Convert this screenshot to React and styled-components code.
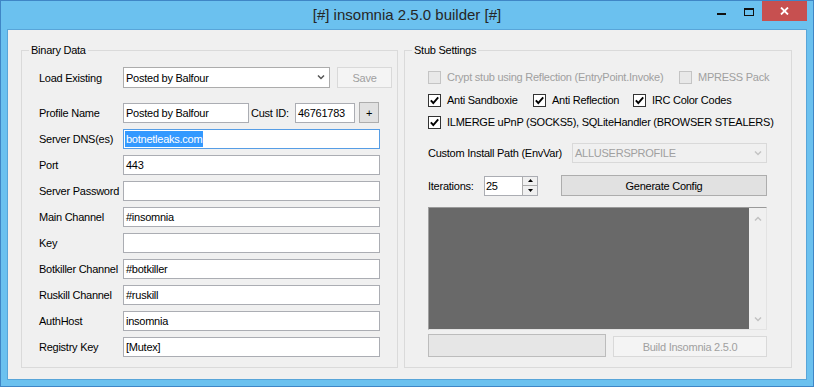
import React from "react";
import styled, { createGlobalStyle } from "styled-components";

const GlobalStyle = createGlobalStyle`
  html, body {
    margin: 0;
    padding: 0;
    background: #ffffff;
  }
  body {
    font-family: "Liberation Sans", Arial, sans-serif;
    font-size: 11px;
    letter-spacing: -0.25px;
    color: #000;
  }
  * {
    box-sizing: border-box;
  }
`;

const Window = styled.div`
  width: 814px;
  height: 387px;
  border: 1px solid #3f86c6;
  background: #6bc1ef;
  display: flex;
  flex-direction: column;
`;

const TitleBar = styled.div`
  height: 28px;
  flex: none;
  display: grid;
  grid-template-columns: 1fr auto 1fr;
`;

const Title = styled.div`
  grid-column: 2;
  font-size: 15px;
  letter-spacing: 0;
  line-height: 28px;
  color: #262626;
  white-space: nowrap;
`;

const Caption = styled.div`
  grid-column: 3;
  justify-self: end;
  align-self: start;
  display: flex;
  margin-right: 6px;
`;

const CaptionButton = styled.div`
  width: ${(p) => p.$w}px;
  height: 20px;
  background: ${(p) => p.$bg || "transparent"};
  display: flex;
  justify-content: center;
  align-items: flex-start;
  padding-top: ${(p) => p.$pt}px;
`;

const MinGlyph = styled.span`
  width: 9px;
  height: 2px;
  background: #111;
`;

const MaxGlyph = styled.span`
  width: 10px;
  height: 8px;
  border: 1px solid #111;
  border-top-width: 2px;
`;

const Client = styled.div`
  flex: 1;
  margin: 0 6px 6px;
  border: 1px solid #58a5d9;
  background: #f0f0f0;
  display: flex;
  align-items: flex-start;
  gap: 6px;
  padding: 13px 0 0 13px;
`;

const Group = styled.fieldset`
  margin: 0;
  padding: 0 0 0 7px;
  min-width: 0;
  width: ${(p) => p.$w}px;
  height: 325px;
  border: 1px solid #dadada;
`;

const Legend = styled.legend`
  padding: 0 2px;
  font-size: 11px;
  line-height: 15px;
`;

const Body = styled.div`
  display: flex;
  flex-direction: column;
  padding: ${(p) => p.$pad};
`;

const Row = styled.div`
  display: flex;
  align-items: center;
  height: ${(p) => p.$h || 20}px;
  margin-top: ${(p) => p.$mt ?? 6}px;
`;

const Label = styled.div`
  width: ${(p) => (p.$w ? `${p.$w}px` : "auto")};
  margin-left: ${(p) => p.$ml || 0}px;
  flex: none;
  white-space: nowrap;
  color: ${(p) => (p.$disabled ? "#a0a0a0" : "#000")};
`;

const TextBox = styled.div`
  width: ${(p) => p.$w}px;
  height: 20px;
  flex: none;
  border: 1px solid ${(p) => (p.$focus ? "#569de5" : "#abadb3")};
  background: #fff;
  padding-left: ${(p) => (p.$focus ? 1 : 2)}px;
  line-height: 18px;
  white-space: nowrap;
  overflow: hidden;
`;

const Selected = styled.span`
  display: inline-block;
  height: 16px;
  line-height: 16px;
  margin-top: 1px;
  vertical-align: top;
  padding: 0 1px;
  background: #3399ff;
  color: #fff;
`;

const Combo = styled.div`
  width: ${(p) => p.$w}px;
  height: ${(p) => p.$h}px;
  flex: none;
  display: flex;
  align-items: center;
  border: 1px solid ${(p) => (p.$disabled ? "#d9d9d9" : "#acacac")};
  background: ${(p) => (p.$disabled ? "#f0f0f0" : "#fff")};
  color: ${(p) => (p.$disabled ? "#a0a0a0" : "#000")};
  padding-left: 2px;
`;

const ComboText = styled.span`
  flex: 1;
  white-space: nowrap;
`;

const ComboArrow = styled.span`
  width: 17px;
  display: flex;
  justify-content: center;
  align-items: center;
`;

const Button = styled.div`
  width: ${(p) => p.$w}px;
  height: ${(p) => p.$h || 21}px;
  margin-left: ${(p) => p.$ml || 0}px;
  flex: none;
  align-self: ${(p) => p.$self || "auto"};
  display: flex;
  justify-content: center;
  align-items: center;
  white-space: nowrap;
  border: 1px solid ${(p) => (p.$disabled ? "#d9d9d9" : "#adadad")};
  background: ${(p) => (p.$disabled ? "#f4f4f4" : "#e1e1e1")};
  color: ${(p) => (p.$disabled ? "#a0a0a0" : "#000")};
`;

const CheckRow = styled.div`
  display: flex;
  align-items: center;
  height: 16px;
  margin-top: ${(p) => p.$mt || 0}px;
`;

const CheckItem = styled.div`
  width: ${(p) => (p.$w ? `${p.$w}px` : "auto")};
  flex: none;
  display: flex;
  align-items: center;
  gap: 6px;
  white-space: nowrap;
  color: ${(p) => (p.$disabled ? "#a0a0a0" : "#000")};
`;

const Box = styled.span`
  width: 13px;
  height: 13px;
  flex: none;
  border: 1px solid ${(p) => (p.$disabled ? "#c4c4c4" : "#333")};
  background: ${(p) => (p.$disabled ? "#e8e8e8" : "#fff")};
  display: flex;
  justify-content: center;
  align-items: center;
`;

const NumBox = styled.div`
  width: 54px;
  height: 20px;
  flex: none;
  display: flex;
  border: 1px solid #abadb3;
  background: #fff;
`;

const NumText = styled.span`
  flex: 1;
  padding-left: 1px;
  line-height: 18px;
`;

const Spin = styled.div`
  width: 15px;
  display: flex;
  flex-direction: column;
  border-left: 1px solid #acacac;
`;

const SpinButton = styled.div`
  flex: 1;
  display: flex;
  justify-content: center;
  align-items: center;
  background: #f0f0f0;
  border-top: ${(p) => (p.$lower ? "1px solid #acacac" : "none")};
`;

const Log = styled.div`
  width: 339px;
  height: 123px;
  margin-top: 11px;
  display: flex;
  border: 1px solid;
  border-color: #9a9a9a #e3e3e3 #e3e3e3 #a0a0a0;
`;

const LogArea = styled.div`
  flex: 1;
  background: #696969;
`;

const ScrollBar = styled.div`
  width: 17px;
  background: #f0f0f0;
  display: flex;
  flex-direction: column;
  justify-content: space-between;
  align-items: center;
  padding: 8px 0 7px;
`;

const Progress = styled.div`
  width: 178px;
  height: 23px;
  flex: none;
  border: 1px solid #bcbcbc;
  background: #e6e6e6;
`;

const Chevron = ({ up, color }) => (
  <svg width="8" height="5" viewBox="0 0 8 5">
    <polyline
      points={up ? "1,4.5 4,1.5 7,4.5" : "1,0.5 4,3.5 7,0.5"}
      fill="none"
      stroke={color}
      strokeWidth="1.5"
    />
  </svg>
);

const Triangle = ({ up }) => (
  <svg width="5" height="3" viewBox="0 0 5 3">
    <polygon points={up ? "0,3 5,3 2.5,0" : "0,0 5,0 2.5,3"} fill="#000" />
  </svg>
);

const CheckBox = ({ checked, disabled }) => (
  <Box $disabled={disabled}>
    {checked && (
      <svg width="11" height="11" viewBox="0 0 11 11">
        <polyline
          points="1.8,5.4 4.3,8 9.2,2.3"
          fill="none"
          stroke="#000"
          strokeWidth="1.9"
        />
      </svg>
    )}
  </Box>
);

const Check = ({ label, checked, disabled, w }) => (
  <CheckItem $w={w} $disabled={disabled}>
    <CheckBox checked={checked} disabled={disabled} />
    {label}
  </CheckItem>
);

const fields = [
  ["Port", "443"],
  ["Server Password", ""],
  ["Main Channel", "#insomnia"],
  ["Key", ""],
  ["Botkiller Channel", "#botkiller"],
  ["Ruskill Channel", "#ruskill"],
  ["AuthHost", "insomnia"],
  ["Registry Key", "[Mutex]"],
];

export default function App() {
  return (
    <>
      <GlobalStyle />
      <Window>
        <TitleBar>
          <Title>[#] insomnia 2.5.0 builder [#]</Title>
          <Caption>
            <CaptionButton $w={27} $pt={12}>
              <MinGlyph />
            </CaptionButton>
            <CaptionButton $w={27} $pt={7}>
              <MaxGlyph />
            </CaptionButton>
            <CaptionButton $w={45} $pt={6} $bg="#c75050">
              <svg width="9" height="8" viewBox="0 0 9 8">
                <path
                  d="M1 0.5 L8 7.5 M8 0.5 L1 7.5"
                  stroke="#fff"
                  strokeWidth="1.8"
                />
              </svg>
            </CaptionButton>
          </Caption>
        </TitleBar>

        <Client>
          <Group $w={377}>
            <Legend>Binary Data</Legend>
            <Body $pad="9px 0 0 10px">
              <Row $h={21} $mt={0}>
                <Label $w={84}>Load Existing</Label>
                <Combo $w={207} $h={21}>
                  <ComboText>Posted by Balfour</ComboText>
                  <ComboArrow>
                    <Chevron color="#555" />
                  </ComboArrow>
                </Combo>
                <Button $w={55} $ml={7} $disabled>
                  Save
                </Button>
              </Row>

              <Row $mt={15}>
                <Label $w={84}>Profile Name</Label>
                <TextBox $w={126}>Posted by Balfour</TextBox>
                <Label $w={44} $ml={2}>
                  Cust ID:
                </Label>
                <TextBox $w={60}>46761783</TextBox>
                <Button $w={20} $ml={4} $self="flex-end">
                  +
                </Button>
              </Row>

              <Row>
                <Label $w={84}>Server DNS(es)</Label>
                <TextBox $w={257} $focus>
                  <Selected>botnetleaks.com</Selected>
                </TextBox>
              </Row>

              {fields.map(([label, value]) => (
                <Row key={label}>
                  <Label $w={84}>{label}</Label>
                  <TextBox $w={257}>{value}</TextBox>
                </Row>
              ))}
            </Body>
          </Group>

          <Group $w={388}>
            <Legend>Stub Settings</Legend>
            <Body $pad="11px 0 0 16px">
              <CheckRow>
                <Check
                  w={251}
                  disabled
                  label="Crypt stub using Reflection (EntryPoint.Invoke)"
                />
                <Check disabled label="MPRESS Pack" />
              </CheckRow>
              <CheckRow $mt={7}>
                <Check w={105} checked label="Anti Sandboxie" />
                <Check w={100} checked label="Anti Reflection" />
                <Check checked label="IRC Color Codes" />
              </CheckRow>
              <CheckRow $mt={6}>
                <Check
                  checked
                  label="ILMERGE uPnP (SOCKS5), SQLiteHandler (BROWSER STEALERS)"
                />
              </CheckRow>

              <Row $mt={13}>
                <Label $w={144}>Custom Install Path (EnvVar)</Label>
                <Combo $w={195} $h={20} $disabled>
                  <ComboText>ALLUSERSPROFILE</ComboText>
                  <ComboArrow>
                    <Chevron color="#c4c4c4" />
                  </ComboArrow>
                </Combo>
              </Row>

              <Row $h={21} $mt={12}>
                <Label $w={56}>Iterations:</Label>
                <NumBox>
                  <NumText>25</NumText>
                  <Spin>
                    <SpinButton>
                      <Triangle up />
                    </SpinButton>
                    <SpinButton $lower>
                      <Triangle />
                    </SpinButton>
                  </Spin>
                </NumBox>
                <Button $w={206} $ml={23}>
                  Generate Config
                </Button>
              </Row>

              <Log>
                <LogArea />
                <ScrollBar>
                  <Chevron up color="#c2c2c2" />
                  <Chevron color="#c2c2c2" />
                </ScrollBar>
              </Log>

              <Row $h={23} $mt={4}>
                <Progress />
                <Button $w={154} $ml={7} $self="flex-end" $disabled>
                  Build Insomnia 2.5.0
                </Button>
              </Row>
            </Body>
          </Group>
        </Client>
      </Window>
    </>
  );
}
